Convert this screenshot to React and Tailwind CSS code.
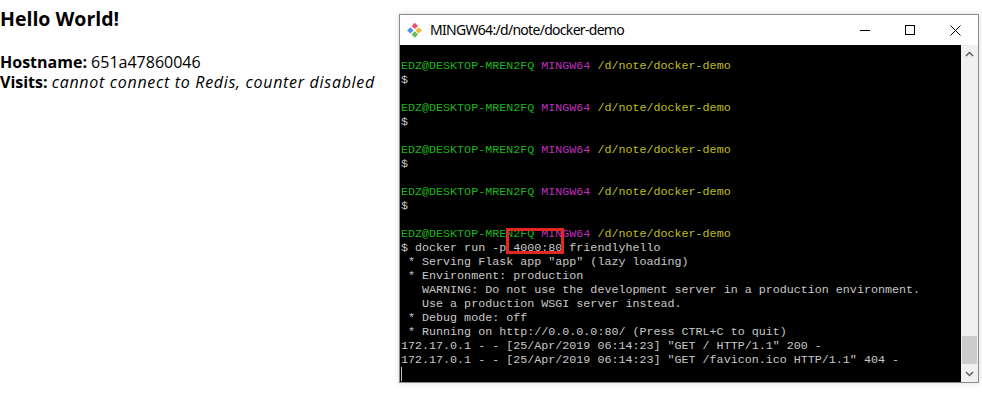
import React from 'react';

const prompt = (
  <>
    <span className="text-[#1cb51c]">EDZ@DESKTOP-MREN2FQ</span>{' '}
    <span className="text-[#bf2fbf]">MINGW64</span>{' '}
    <span className="text-[#bfbf1c]">/d/note/docker-demo</span>
  </>
);

const outputLines = [
  ' * Serving Flask app "app" (lazy loading)',
  ' * Environment: production',
  '   WARNING: Do not use the development server in a production environment.',
  '   Use a production WSGI server instead.',
  ' * Debug mode: off',
  ' * Running on http://0.0.0.0:80/ (Press CTRL+C to quit)',
  '172.17.0.1 - - [25/Apr/2019 06:14:23] "GET / HTTP/1.1" 200 -',
  '172.17.0.1 - - [25/Apr/2019 06:14:23] "GET /favicon.ico HTTP/1.1" 404 -',
];

function GitIcon() {
  return (
    <svg width="15" height="15" viewBox="0 0 14 14" className="shrink-0">
      <rect x="5.2" y="0.6" width="4.2" height="4.2" transform="rotate(45 7.3 2.7)" fill="#e9546b" />
      <rect x="1" y="4.8" width="4.2" height="4.2" transform="rotate(45 3.1 6.9)" fill="#4f8fe6" />
      <rect x="8.8" y="4.8" width="4.2" height="4.2" transform="rotate(45 10.9 6.9)" fill="#f2b632" />
      <rect x="5.2" y="8.6" width="4.2" height="4.2" transform="rotate(45 7.3 10.7)" fill="#5cc04f" />
    </svg>
  );
}

function Terminal() {
  return (
    <div className="relative w-[580px] h-[369px] border border-[#8a8a8a] bg-white flex flex-col shadow-[0_0_6px_rgba(0,0,0,0.15)]">
      {/* title bar */}
      <div className="h-[30px] flex items-center shrink-0">
        <div className="pl-[7px] pr-[8px] flex items-center">
          <GitIcon />
        </div>
        <span className="flex-1 text-[14px] tracking-[-0.7px] text-black font-['Noto_Sans',sans-serif] leading-none -mt-[1px]">
          MINGW64:/d/note/docker-demo
        </span>
        <div className="flex h-full">
          <div className="w-[45px] flex items-center justify-center">
            <div className="w-[10px] h-px bg-black" />
          </div>
          <div className="w-[45px] flex items-center justify-center">
            <div className="w-[10px] h-[10px] border border-black" />
          </div>
          <div className="w-[46px] flex items-center justify-center">
            <svg width="11" height="11" viewBox="0 0 11 11">
              <path d="M0.5 0.5 L10.5 10.5 M10.5 0.5 L0.5 10.5" stroke="#000" strokeWidth="1" />
            </svg>
          </div>
        </div>
      </div>

      {/* body */}
      <div className="flex-1 flex min-h-0">
        <div className="relative flex-1 bg-black pl-[1px] font-['Liberation_Mono',monospace] text-[11.7px] leading-[14px] text-[#c8c8c8] whitespace-pre overflow-hidden">
          <div className="h-[14px]" />
          {[0, 1, 2, 3].map((i) => (
            <div key={i}>
              <div>{prompt}</div>
              <div>$</div>
              <div className="h-[14px]" />
            </div>
          ))}
          <div>{prompt}</div>
          <div>$ docker run -p 4000:80 friendlyhello</div>
          {outputLines.map((l, i) => (
            <div key={i}>{l}</div>
          ))}
          <div className="h-[14px] flex items-center">
            <div className="w-px h-[14px] bg-[#c0c0c0]" />
          </div>
          {/* red highlight box */}
          <div className="absolute left-[106px] top-[183px] w-[58px] h-[26px] border-[3px] border-[#e3261f]" />
        </div>

        {/* scrollbar */}
        <div className="w-[17px] bg-[#f0f0f0] flex flex-col items-center">
          <div className="h-[17px] flex items-center justify-center">
            <svg width="9" height="6" viewBox="0 0 9 6">
              <path d="M1 5 L4.5 1.5 L8 5" fill="none" stroke="#606060" strokeWidth="1.5" />
            </svg>
          </div>
          <div className="flex-1 w-full flex flex-col justify-end pb-[1px]">
            <div className="mx-[1px] h-[28px] bg-[#cdcdcd]" />
          </div>
          <div className="h-[17px] flex items-center justify-center">
            <svg width="9" height="6" viewBox="0 0 9 6">
              <path d="M1 1 L4.5 4.5 L8 1" fill="none" stroke="#606060" strokeWidth="1.5" />
            </svg>
          </div>
        </div>
      </div>
    </div>
  );
}

export default function App() {
  return (
    <div className="w-[982px] h-[413px] bg-white flex font-['Open_Sans',sans-serif] text-black">
      <div className="w-[399px] shrink-0 pt-[5px]">
        <h3 className="text-[19.5px] font-bold leading-[28px]">Hello World!</h3>
        <div className="mt-[19px] text-[16px] leading-[20px]">
          <div>
            <b>Hostname:</b> 651a47860046
          </div>
          <div>
            <b>Visits:</b> <i className="tracking-[0.7px]">cannot connect to Redis, counter disabled</i>
          </div>
        </div>
      </div>
      <div className="pt-[14px]">
        <Terminal />
      </div>
    </div>
  );
}
